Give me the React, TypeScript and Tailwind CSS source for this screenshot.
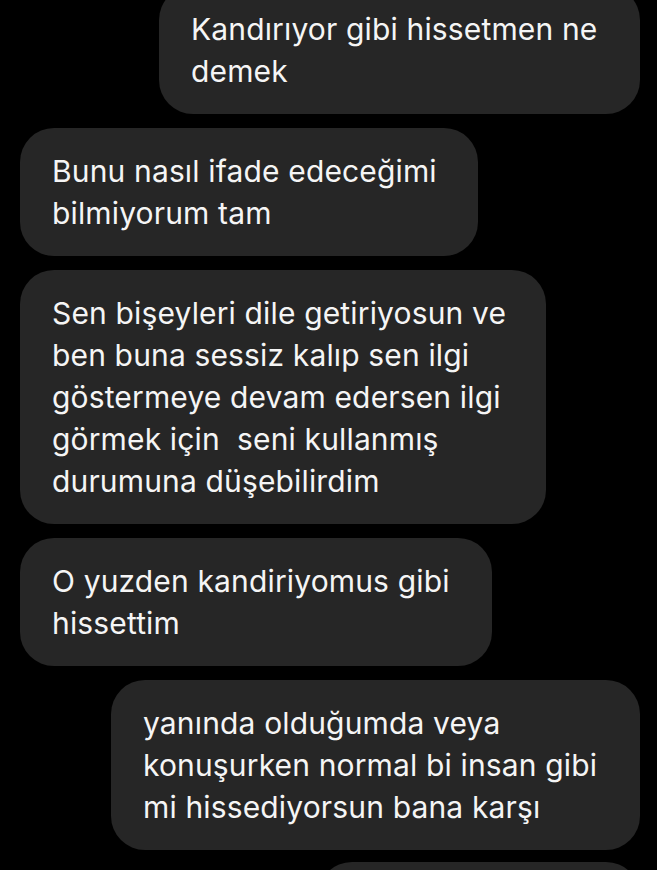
const messages = [
  { side: "right", w: "w-[481px]", lines: ["Kandırıyor gibi hissetmen ne", "demek"] },
  { side: "left", w: "w-[458px]", lines: ["Bunu nasıl ifade edeceğimi", "bilmiyorum tam"] },
  {
    side: "left",
    w: "w-[526px]",
    lines: [
      "Sen bişeyleri dile getiriyosun ve",
      "ben buna sessiz kalıp sen ilgi",
      "göstermeye devam edersen ilgi",
      "görmek için  seni kullanmış",
      "durumuna düşebilirdim",
    ],
  },
  { side: "left", w: "w-[472px]", lines: ["O yuzden kandiriyomus gibi", "hissettim"] },
  {
    side: "right",
    w: "w-[529px]",
    lines: ["yanında olduğumda veya", "konuşurken normal bi insan gibi", "mi hissediyorsun bana karşı"],
  },
];

export default function App() {
  return (
    <div className="h-[870px] w-[657px] overflow-hidden bg-black font-['Inter',sans-serif]">
      <div className="mt-[-14px] flex flex-col gap-[14px] pl-[20px] pr-[17px]">
        {messages.map((m, i) => (
          <div key={i} className={`flex ${m.side === "right" ? "justify-end" : "justify-start"}`}>
            <div
              className={`${m.w} rounded-[34px] bg-[#262626] px-[32px] py-[22px] text-[30px] leading-[42px] tracking-[0.15px] text-[#f5f5f5] whitespace-pre`}
            >
              {m.lines.map((l, j) => (
                <div key={j}>{l}</div>
              ))}
            </div>
          </div>
        ))}
        {/* next bubble, only its top edge is visible */}
        <div className="-mt-[2px] flex justify-end">
          <div className="h-[128px] w-[322px] rounded-[34px] bg-[#262626]" />
        </div>
      </div>
    </div>
  );
}
